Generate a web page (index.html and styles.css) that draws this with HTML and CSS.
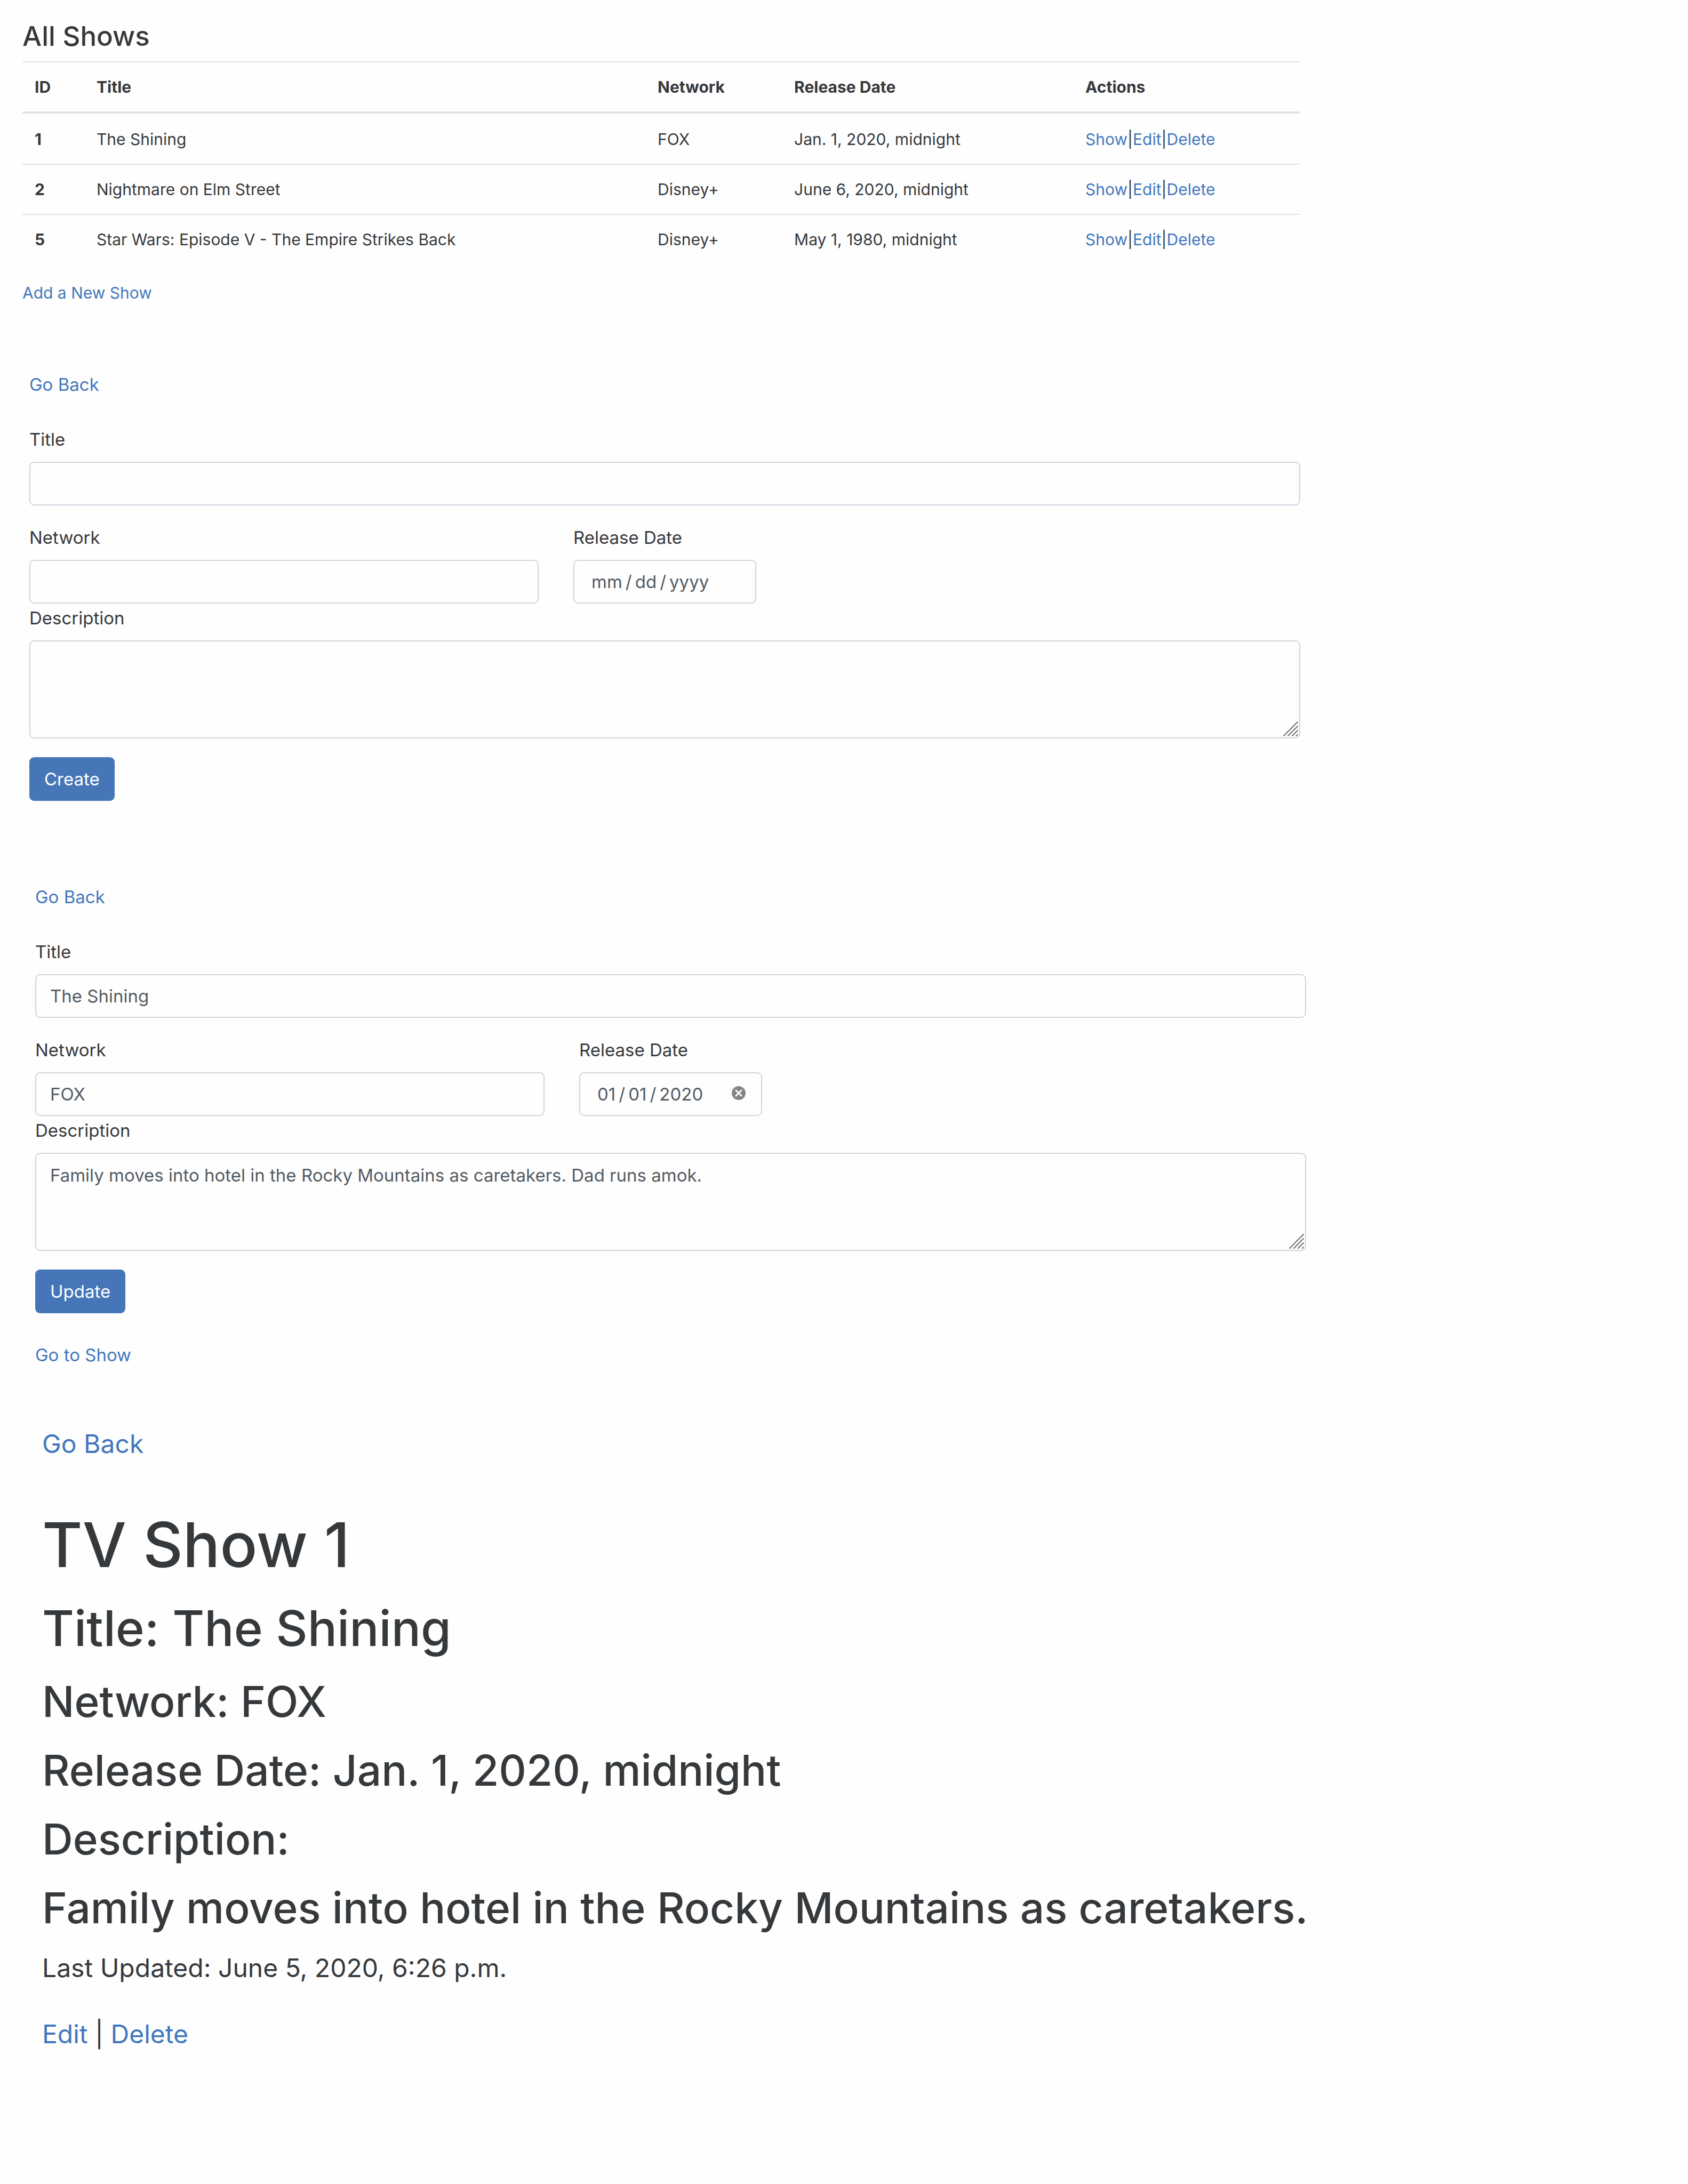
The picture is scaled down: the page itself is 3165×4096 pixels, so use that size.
FILE: index.html
```html
<!DOCTYPE html>
<html lang="en">
<head>
<meta charset="utf-8">
<title>TV Shows</title>
<link rel="stylesheet" href="styles.css">
</head>
<body>
<section class="screen screen-list">
  <h2 class="list-heading">All Shows</h2>
  <table class="shows">
    <colgroup>
      <col class="col-id"><col class="col-title"><col class="col-network"><col class="col-date"><col>
    </colgroup>
    <thead>
      <tr><th scope="col">ID</th><th scope="col">Title</th><th scope="col">Network</th><th scope="col">Release Date</th><th scope="col">Actions</th></tr>
    </thead>
    <tbody>
      <tr><th scope="row">1</th><td>The Shining</td><td>FOX</td><td>Jan. 1, 2020, midnight</td><td><a href="#">Show</a>|<a href="#">Edit</a>|<a href="#">Delete</a></td></tr>
      <tr><th scope="row">2</th><td>Nightmare on Elm Street</td><td>Disney+</td><td>June 6, 2020, midnight</td><td><a href="#">Show</a>|<a href="#">Edit</a>|<a href="#">Delete</a></td></tr>
      <tr><th scope="row">5</th><td>Star Wars: Episode V - The Empire Strikes Back</td><td>Disney+</td><td>May 1, 1980, midnight</td><td><a href="#">Show</a>|<a href="#">Edit</a>|<a href="#">Delete</a></td></tr>
    </tbody>
  </table>
  <a class="add-link" href="#">Add a New Show</a>
</section>

<section class="screen screen-create">
  <a class="back-link" href="#">Go Back</a>
  <form>
    <div class="field field-title">
      <label for="new-title">Title</label>
      <input class="control" id="new-title" type="text">
    </div>
    <div class="field-row">
      <div class="field field-network">
        <label for="new-network">Network</label>
        <input class="control" id="new-network" type="text">
      </div>
      <div class="field field-date">
        <label for="new-date">Release Date</label>
        <input class="control date" id="new-date" type="date">
      </div>
    </div>
    <div class="field">
      <label for="new-desc">Description</label>
      <div class="area-wrap">
        <textarea class="control area" id="new-desc"></textarea>
        <svg class="grip" viewBox="0 0 28 28" aria-hidden="true"><path d="M1 27 27 1M9 27 27 9M17 27 27 17M25 27 27 25"/></svg>
      </div>
    </div>
    <button class="btn" type="button">Create</button>
  </form>
</section>

<section class="screen screen-edit">
  <a class="back-link" href="#">Go Back</a>
  <form>
    <div class="field field-title">
      <label for="edit-title">Title</label>
      <input class="control" id="edit-title" type="text" value="The Shining">
    </div>
    <div class="field-row">
      <div class="field field-network">
        <label for="edit-network">Network</label>
        <input class="control" id="edit-network" type="text" value="FOX">
      </div>
      <div class="field field-date">
        <label for="edit-date">Release Date</label>
        <input class="control date" id="edit-date" type="date" value="2020-01-01">
        <button class="clear" type="button" aria-label="Clear date"><svg viewBox="0 0 26 26" aria-hidden="true"><circle cx="13" cy="13" r="13"/><path d="M8 8l10 10M18 8L8 18"/></svg></button>
      </div>
    </div>
    <div class="field">
      <label for="edit-desc">Description</label>
      <div class="area-wrap">
        <textarea class="control area" id="edit-desc">Family moves into hotel in the Rocky Mountains as caretakers. Dad runs amok.</textarea>
        <svg class="grip" viewBox="0 0 28 28" aria-hidden="true"><path d="M1 27 27 1M9 27 27 9M17 27 27 17M25 27 27 25"/></svg>
      </div>
    </div>
    <button class="btn" type="button">Update</button>
  </form>
  <a class="show-link" href="#">Go to Show</a>
</section>

<section class="screen screen-detail">
  <a class="detail-back" href="#">Go Back</a>
  <h1>TV Show 1</h1>
  <h2>Title: The Shining</h2>
  <h3>Network: FOX</h3>
  <h3>Release Date: Jan. 1, 2020, midnight</h3>
  <h3>Description:</h3>
  <h3>Family moves into hotel in the Rocky Mountains as caretakers.</h3>
  <p class="updated">Last Updated: June 5, 2020, 6:26 p.m.</p>
  <p class="detail-actions"><a href="#">Edit</a> | <a href="#">Delete</a></p>
</section>
</body>
</html>
```
FILE: styles.css
```css
*, *::before, *::after { box-sizing: border-box; }

body {
  margin: 0;
  background: #fefefe;
  color: #36393c;
  font-family: Inter, "Liberation Sans", sans-serif;
  font-size: 33px;
  line-height: 48px;
}

h1, h2, h3, p { margin: 0; }
h1, h2, h3 { font-weight: 500; }
a { color: #4277bd; text-decoration: none; }

/* List of shows */
.screen-list {
  width: 77%;
  padding: 38px 0 0 42px;
  font-size: 30px;
  line-height: 46px;
}
.list-heading {
  margin-bottom: 17px;
  font-size: 51px;
  line-height: 60px;
}
.shows {
  width: 100%;
  margin-bottom: 31px;
  border-spacing: 0;
  table-layout: fixed;
  text-align: left;
}
.col-id { width: 116px; }
.col-network { width: 256px; }
.col-date { width: 546px; }
.shows col:last-child { width: 425px; }
.shows th, .shows td {
  padding: 23px;
  border-top: 2px solid #dee2e8;
  white-space: nowrap;
}
.shows th { font-weight: 700; }
.shows thead th { border-bottom: 4px solid #dee2e8; }
.shows tbody tr:first-child > * { border-top-color: transparent; }
.add-link { display: block; }

/* Create and edit forms */
.screen-create, .screen-edit { width: 2383px; max-width: 76%; }
.screen-create { margin: 125px 0 0 55px; }
.screen-edit { margin: 156px 0 0 66px; }
.back-link { display: block; margin-bottom: 55px; }
.field { position: relative; }
.field label { display: block; margin-bottom: 18px; }
.field-title { margin-bottom: 36px; }
.field-row { display: flex; gap: 65px; margin-bottom: 3px; }
.field-network { width: 955px; }
.field-date { width: 343px; }
.control {
  display: block;
  width: 100%;
  height: 82px;
  margin: 0;
  padding: 16px 26px;
  border: 2px solid #d0d6df;
  border-radius: 9px;
  background: #fefefe;
  color: #535b63;
  font: inherit;
}
.date { padding: 15px 31px; }
.date::-webkit-calendar-picker-indicator { display: none; }
.date::-webkit-datetime-edit-text { padding: 0 5px; }
.clear {
  position: absolute;
  right: 31px;
  bottom: 30px;
  width: 26px;
  height: 26px;
  padding: 0;
  border: 0;
  background: none;
}
.clear svg { display: block; fill: #858585; }
.clear path { stroke: #fefefe; stroke-width: 3; stroke-linecap: round; }
.area-wrap { position: relative; }
.area { height: 184px; resize: none; }
.grip {
  position: absolute;
  right: 4px;
  bottom: 4px;
  width: 28px;
  height: 28px;
  fill: none;
  stroke: #6e6e6e;
  stroke-width: 2;
  stroke-linecap: round;
}
.btn {
  height: 82px;
  margin-top: 35px;
  padding: 0 28px;
  border: 0;
  border-radius: 9px;
  background: #4676b7;
  color: #fff;
  font: inherit;
  display: block;
}
.show-link { display: block; margin-top: 54px; }

/* Show details */
.screen-detail {
  margin: 107px 0 0 79px;
  padding-bottom: 200px;
  font-size: 48px;
  line-height: 72px;
}
.detail-back { display: block; margin-bottom: 85px; }
h1 { margin-bottom: 33px; font-size: 116px; line-height: 136px; }
.screen-detail h2 { margin-bottom: 33px; font-size: 92px; line-height: 112px; }
h3 { margin-bottom: 33px; font-size: 80px; line-height: 96px; }
.updated { margin-bottom: 56px; line-height: 64px; }
```
